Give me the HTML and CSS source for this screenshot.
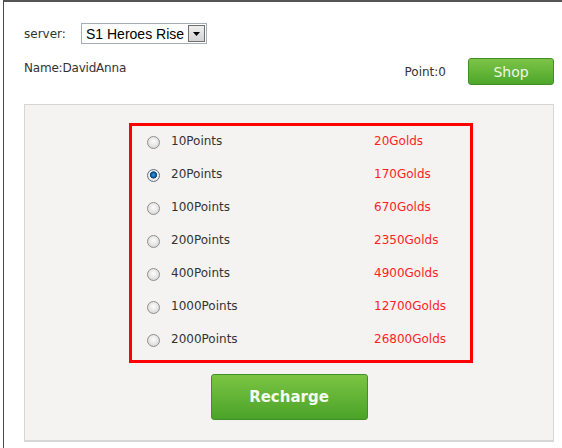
FILE: index.html
```html
<!DOCTYPE html>
<html>
<head>
<meta charset="utf-8">
<link rel="stylesheet" href="styles.css">
</head>
<body>
<div class="frame">
  <div class="server-row">
    <span class="label">server:</span>
    <div class="select">
      <span class="select-text">S1 Heroes Rise</span>
      <span class="select-btn"><svg width="7" height="4" viewBox="0 0 7 4"><path d="M0 0h7L3.5 4z" fill="#000"/></svg></span>
    </div>
  </div>
  <div class="info-row">
    <span class="name">Name:DavidAnna</span>
    <div class="point-box">
      <span class="point">Point:0</span>
      <button class="shop">Shop</button>
    </div>
  </div>
  <div class="panel">
    <div class="options">
      <label class="opt"><input type="radio" name="p" class="radio"><span class="pts">10Points</span><span class="gold">20Golds</span></label>
      <label class="opt"><input type="radio" name="p" class="radio" checked><span class="pts">20Points</span><span class="gold">170Golds</span></label>
      <label class="opt"><input type="radio" name="p" class="radio"><span class="pts">100Points</span><span class="gold">670Golds</span></label>
      <label class="opt"><input type="radio" name="p" class="radio"><span class="pts">200Points</span><span class="gold">2350Golds</span></label>
      <label class="opt"><input type="radio" name="p" class="radio"><span class="pts">400Points</span><span class="gold">4900Golds</span></label>
      <label class="opt"><input type="radio" name="p" class="radio"><span class="pts">1000Points</span><span class="gold">12700Golds</span></label>
      <label class="opt"><input type="radio" name="p" class="radio"><span class="pts">2000Points</span><span class="gold">26800Golds</span></label>
    </div>
    <div class="actions">
      <button class="recharge">Recharge</button>
    </div>
  </div>
</div>
</body>
</html>
```
FILE: styles.css
```css
html, body {
  margin: 0;
  padding: 0;
  background: #fff;
}
body {
  font-family: "DejaVu Sans", Tahoma, sans-serif;
  font-size: 12px;
  color: #3a3a3a;
}
.frame {
  margin-left: 3px;
  border-left: 1px solid #4a4a4a;
  border-top: 2px solid #555;
  padding: 21px 8px 6px 20px;
}
.server-row {
  display: flex;
  align-items: center;
  height: 21px;
}
.label {
  width: 57px;
  font-size: 12px;
  color: #333;
}
.select {
  width: 126px;
  height: 21px;
  box-sizing: border-box;
  border: 1px solid #a7adb5;
  background: #fff;
  display: flex;
  align-items: center;
  justify-content: space-between;
  padding: 0 1px 0 4px;
}
.select-text {
  font-family: "Liberation Sans", Arial, sans-serif;
  font-size: 14px;
  color: #000;
}
.select-btn {
  width: 17px;
  height: 17px;
  box-sizing: border-box;
  border: 1px solid #6f6f6f;
  background: linear-gradient(#eeeeee, #d4d4d4);
  display: flex;
  align-items: center;
  justify-content: center;
}
.info-row {
  display: flex;
  justify-content: space-between;
  align-items: flex-start;
  margin-top: 14px;
}
.name {
  margin-top: 3px;
  color: #333;
  letter-spacing: -0.2px;
}
.point-box {
  display: flex;
  align-items: center;
}
.point {
  color: #333;
  margin-right: 22px;
  margin-top: 1px;
}
.shop {
  width: 86px;
  height: 27px;
  border: 1px solid #3f9125;
  border-radius: 3px;
  background: linear-gradient(#7dc447, #4da62b);
  color: #eef8e6;
  font-family: "DejaVu Sans", Tahoma, sans-serif;
  font-size: 14px;
  padding: 0;
  margin: 0;
}
.panel {
  margin-top: 19px;
  height: 338px;
  box-sizing: border-box;
  border: 1px solid #d6d6d6;
  border-bottom-width: 2px;
  background: #f4f3f1;
  padding-top: 18px;
}
.options {
  margin-left: 104px;
  width: 344px;
  height: 240px;
  box-sizing: border-box;
  border: 3px solid #ff0000;
  padding-top: 0;
}
.opt {
  display: flex;
  align-items: center;
  height: 33px;
  padding-left: 15px;
  box-sizing: border-box;
  padding-bottom: 3px;
}
.radio {
  appearance: none;
  -webkit-appearance: none;
  width: 13px;
  height: 13px;
  margin: 3px 11px 0 0;
  border-radius: 50%;
  border: 1px solid #8e8e8e;
  background: radial-gradient(circle at 50% 40%, #fdfdfd 0%, #e4e4e4 55%, #cfcfcf 100%);
  box-sizing: border-box;
}
.radio:checked {
  background: radial-gradient(circle at 50% 45%, #3a9be0 0%, #0f5fa3 28%, #0d3f70 40%, #f2f2f2 48%, #dcdcdc 100%);
  border-color: #5f6f80;
}
.pts {
  width: 203px;
  color: #333;
}
.gold {
  color: #ff1e1e;
}
.actions {
  display: flex;
  justify-content: center;
  margin-top: 11px;
}
.recharge {
  width: 157px;
  height: 46px;
  border: 1px solid #3f9125;
  border-radius: 3px;
  background: linear-gradient(#7cc443, #4aa329);
  color: #f4fbef;
  font-family: "DejaVu Sans", Tahoma, sans-serif;
  font-weight: bold;
  font-size: 15px;
  padding: 0;
}
```
